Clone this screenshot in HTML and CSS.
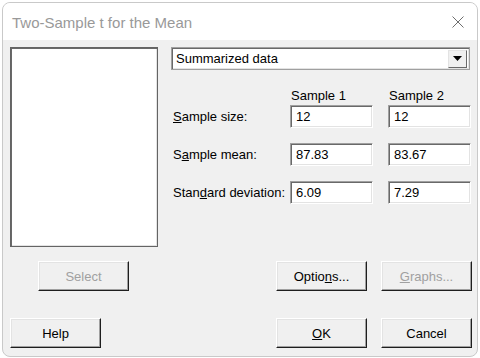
FILE: index.html
```html
<!DOCTYPE html>
<html lang="en">
<head>
  <meta charset="UTF-8" />
  <title>Two-Sample t for the Mean</title>
  <link rel="stylesheet" href="styles.css">
</head>
<body>
  <div class="dialog">
    <div class="titlebar">
      <span class="title">Two-Sample t for the Mean</span>
      <svg class="close" width="12" height="12" viewBox="0 0 12 12">
        <path d="M0.5 0.5 L11.5 11.5 M11.5 0.5 L0.5 11.5" stroke="#6e6e6e" stroke-width="1" fill="none"/>
      </svg>
    </div>

    <div class="content">
      <div class="top">
        <div class="listbox"></div>

        <div class="panel">
          <div class="combo">
            <span class="combo-text">Summarized data</span>
            <span class="combo-btn">
              <svg width="9" height="5" viewBox="0 0 9 5"><path d="M0 0 H9 L4.5 5 Z" fill="#000"/></svg>
            </span>
          </div>

          <div class="heads">
            <span class="head">Sample 1</span>
            <span class="head">Sample 2</span>
          </div>

          <div class="grid">
            <label class="lbl"><u>S</u>ample size:</label>
            <input class="field" type="text" value="12">
            <input class="field" type="text" value="12">

            <label class="lbl">S<u>a</u>mple mean:</label>
            <input class="field" type="text" value="87.83">
            <input class="field" type="text" value="83.67">

            <label class="lbl">Stan<u>d</u>ard deviation:</label>
            <input class="field" type="text" value="6.09">
            <input class="field" type="text" value="7.29">
          </div>
        </div>
      </div>

      <div class="row row-1">
        <button class="btn btn-select" disabled>Select</button>
        <span class="spacer"></span>
        <button class="btn">Optio<u>n</u>s...</button>
        <button class="btn" disabled><u>G</u>raphs...</button>
      </div>

      <div class="row row-2">
        <button class="btn">Help</button>
        <span class="spacer"></span>
        <button class="btn"><u>O</u>K</button>
        <button class="btn">Cancel</button>
      </div>
    </div>
  </div>
</body>
</html>
```

FILE: styles.css
```css
* {
  box-sizing: border-box;
}
body {
  margin: 0;
  background: #fff;
  font-family: "Liberation Sans", Arial, sans-serif;
  font-size: 13px;
  color: #000;
}
.dialog {
  margin: 2px 0 0 2px;
  width: 476px;
  height: 355px;
  border: 1px solid #c9c9c9;
  border-radius: 8px;
  overflow: hidden;
  background: #f0f0f0;
}
.titlebar {
  height: 37px;
  background: #fff;
  display: flex;
  align-items: center;
  padding: 0 12px 0 9px;
}
.title {
  font-size: 15px;
  color: #999;
  flex: 1;
  margin-top: 1px;
}
.close {
  margin-right: 1px;
  margin-top: 1px;
}
.content {
  padding: 7px 0 0 7px;
}
.top {
  display: flex;
}
.listbox {
  width: 148px;
  height: 200px;
  background: #fff;
  border: 1px solid #646464;
  box-shadow: inset 1px 1px #696969, inset -1px -1px #e3e3e3;
}
.panel {
  margin-left: 13px;
  width: 300px;
}
.combo {
  height: 23px;
  width: 299px;
  background: #fff;
  border: 1px solid #a0a0a0;
  box-shadow: inset 1px 1px #696969, inset -1px -1px #e3e3e3;
  display: flex;
  align-items: center;
  padding: 0 2px 0 4px;
}
.combo-text {
  flex: 1;
}
.combo-btn {
  width: 19px;
  height: 18px;
  background: #f0f0f0;
  border-top: 1px solid #e3e3e3;
  border-left: 1px solid #e3e3e3;
  border-right: 1px solid #696969;
  border-bottom: 1px solid #696969;
  display: flex;
  align-items: center;
  justify-content: center;
}
.heads {
  height: 35px;
  display: flex;
  align-items: flex-end;
  padding: 0 0 2px 120px;
}
.head {
  flex: none;
  width: 98px;
}
.head + .head {
  width: 80px;
}
.grid {
  display: grid;
  grid-template-columns: 119px 98px 83px;
  grid-template-rows: 23px 23px 22px;
  row-gap: 15px;
  align-items: center;
}
.lbl {
  padding-left: 2px;
  white-space: nowrap;
}
.field {
  height: 23px;
  width: 83px;
  margin: 0;
  font-family: inherit;
  font-size: 13px;
  color: #000;
  background: #fff;
  border: 1px solid #a0a0a0;
  border-right-color: #fff;
  border-bottom-color: #fff;
  box-shadow: inset 1px 1px #696969, inset -1px -1px #e3e3e3;
  padding: 0 0 0 5px;
  outline: none;
}
.row {
  display: flex;
  height: 30px;
  padding-right: 5px;
}
.row-1 {
  margin-top: 14px;
  padding-left: 28px;
}
.row-2 {
  margin-top: 27px;
}
.spacer {
  flex: 1;
}
.btn {
  width: 91px;
  height: 30px;
  margin: 0 0 0 14px;
  font-family: inherit;
  font-size: 13px;
  color: #000;
  background: #f0f0f0;
  border: 1px solid #fff;
  border-right-color: #1e1e1e;
  border-bottom-color: #1e1e1e;
  box-shadow: inset -1px -1px #a0a0a0, inset 1px 1px #e3e3e3;
  padding: 0;
}
.row .btn:first-child {
  margin-left: 0;
}
.btn:disabled {
  color: #a0a0a0;
}
```
